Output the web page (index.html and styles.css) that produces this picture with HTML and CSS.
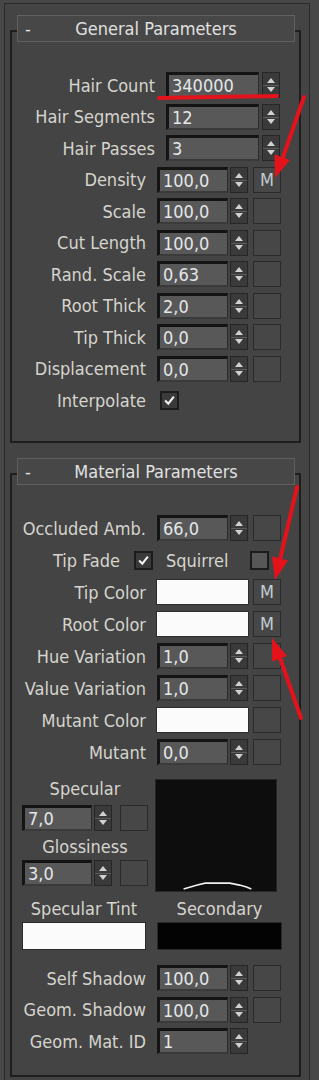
FILE: index.html
```html
<!DOCTYPE html>
<html lang="en">
  <head>
    <meta charset="utf-8" />
    <link rel="stylesheet" href="styles.css">
  </head>
  <body>
    <div class="panel">
      <section class="rollout">
        <div class="rollout-head"><span class="minus">-</span><span class="title">General Parameters</span><span></span></div>
        <div class="rollout-body general">
          <div class="row wide"><span class="lbl">Hair Count</span><span class="fld">340000</span><span class="spin"></span></div>
          <div class="row wide"><span class="lbl">Hair Segments</span><span class="fld">12</span><span class="spin"></span></div>
          <div class="row wide"><span class="lbl">Hair Passes</span><span class="fld">3</span><span class="spin"></span></div>
          <div class="row"><span class="lbl">Density</span><span class="fld">100,0</span><span class="spin"></span><span class="btn">M</span></div>
          <div class="row"><span class="lbl">Scale</span><span class="fld">100,0</span><span class="spin"></span><span class="btn"></span></div>
          <div class="row"><span class="lbl">Cut Length</span><span class="fld">100,0</span><span class="spin"></span><span class="btn"></span></div>
          <div class="row"><span class="lbl">Rand. Scale</span><span class="fld">0,63</span><span class="spin"></span><span class="btn"></span></div>
          <div class="row"><span class="lbl">Root Thick</span><span class="fld">2,0</span><span class="spin"></span><span class="btn"></span></div>
          <div class="row"><span class="lbl">Tip Thick</span><span class="fld">0,0</span><span class="spin"></span><span class="btn"></span></div>
          <div class="row"><span class="lbl">Displacement</span><span class="fld">0,0</span><span class="spin"></span><span class="btn"></span></div>
          <div class="row check-row"><span class="lbl">Interpolate</span><span class="chk on"><svg viewBox="0 0 19 19"><polyline points="4,9.5 8,13.5 15,4.5"/></svg></span></div>
        </div>
      </section>

      <section class="rollout">
        <div class="rollout-head"><span class="minus">-</span><span class="title">Material Parameters</span><span></span></div>
        <div class="rollout-body material">
          <div class="rows">
            <div class="row"><span class="lbl">Occluded Amb.</span><span class="fld">66,0</span><span class="spin"></span><span class="btn"></span></div>
            <div class="row fade"><span class="lbl">Tip Fade</span><span class="chk on"><svg viewBox="0 0 19 19"><polyline points="4,9.5 8,13.5 15,4.5"/></svg></span><span class="sub">Squirrel</span><span class="chk"></span></div>
            <div class="row"><span class="lbl">Tip Color</span><span class="swatch"></span><span class="btn">M</span></div>
            <div class="row"><span class="lbl">Root Color</span><span class="swatch"></span><span class="btn">M</span></div>
            <div class="row"><span class="lbl">Hue Variation</span><span class="fld">1,0</span><span class="spin"></span><span class="btn"></span></div>
            <div class="row"><span class="lbl">Value Variation</span><span class="fld">1,0</span><span class="spin"></span><span class="btn"></span></div>
            <div class="row"><span class="lbl">Mutant Color</span><span class="swatch"></span><span class="btn"></span></div>
            <div class="row"><span class="lbl">Mutant</span><span class="fld">0,0</span><span class="spin"></span><span class="btn"></span></div>
          </div>

          <div class="spec">
            <div class="spec-left">
              <span class="cap">Specular</span>
              <div class="mini"><span class="fld">7,0</span><span class="spin"></span><span class="btn"></span></div>
              <span class="cap gloss">Glossiness</span>
              <div class="mini low"><span class="fld">3,0</span><span class="spin"></span><span class="btn"></span></div>
            </div>
            <div class="curve">
              <svg viewBox="0 0 122 113"><polyline points="28,111 35,109 42,107 50,105 75,105 85,107 92,109 97,111"/></svg>
            </div>
          </div>

          <div class="tints">
            <span class="cap">Specular Tint</span>
            <span class="cap">Secondary</span>
            <span class="tint white"></span>
            <span class="tint black"></span>
          </div>

          <div class="rows shadows">
            <div class="row"><span class="lbl">Self Shadow</span><span class="fld">100,0</span><span class="spin"></span><span class="btn"></span></div>
            <div class="row"><span class="lbl">Geom. Shadow</span><span class="fld">100,0</span><span class="spin"></span><span class="btn"></span></div>
            <div class="row"><span class="lbl">Geom. Mat. ID</span><span class="fld">1</span><span class="spin"></span></div>
          </div>
        </div>
      </section>
    </div>

    <!-- red marks drawn over the screenshot -->
    <svg class="marks" viewBox="0 0 319 1080">
      <line x1="159" y1="98" x2="277" y2="96"/>
      <line x1="304" y1="97" x2="282" y2="160"/>
      <polygon points="275,178 290,160 274.5,154.5"/>
      <line x1="297" y1="487" x2="280" y2="560"/>
      <polygon points="275,580 288,560.5 272,556.5"/>
      <line x1="301" y1="718" x2="280" y2="658"/>
      <polygon points="272,638 287,656 272,661.5"/>
    </svg>
  </body>
</html>
```

FILE: styles.css
```css
* {
  margin: 0;
  box-sizing: border-box;
}
body {
  background-color: #474747;
  font-family: "DejaVu Sans Condensed", "DejaVu Sans", sans-serif;
  font-stretch: condensed;
  font-size: 18px;
  color: #d6d4ce;
  height: 1080px;
  overflow: hidden;
}
.panel {
  width: 306px;
  margin: 3px 0 0 4px;
  padding-top: 11px;
  height: 1077px;
  background-color: #444;
  border: 1px solid #2a2a2a;
  border-bottom: none;
}
.rollout + .rollout {
  margin-top: 15px;
}
.rollout-head {
  position: relative;
  z-index: 1;
  display: grid;
  grid-template-columns: 1fr auto 1fr;
  align-items: center;
  height: 27px;
  margin: 0 14px 0 12px;
  background-color: #474747;
  border: 1px solid #606060;
  color: #e0e0e0;
}
.minus {
  padding-left: 7px;
}
.rollout-body {
  margin: -12px 8px 0 5px;
  border: 2px solid #1e1e1e;
}
.general {
  display: flex;
  flex-direction: column;
  gap: 5.5px;
  padding: 40px 0 28px;
}
.material {
  padding: 40px 0 21px;
}
.rows {
  display: flex;
  flex-direction: column;
  gap: 6px;
}
.rows.shadows {
  gap: 5.5px;
  margin-top: 15px;
}
.row {
  display: flex;
  align-items: center;
  height: 26px;
}
.lbl {
  width: 134px;
  margin-right: 11px;
  text-align: right;
  white-space: nowrap;
}
.row.wide .lbl {
  width: 143px;
}
.fld {
  width: 71px;
  height: 26px;
  flex: none;
  padding-left: 3px;
  line-height: 21px;
  background-color: #585858;
  color: #e4e7ea;
  border-top: 3px solid #141414;
  border-left: 3px solid #141414;
  border-right: 1px solid #2c2c2c;
  border-bottom: 2px solid #3a3a3a;
}
.row.wide .fld {
  width: 93px;
}
.spin {
  position: relative;
  width: 18px;
  height: 26px;
  flex: none;
  margin-left: 2px;
  background: linear-gradient(#3a3a3a 0 12px, #5c5c5c 12px 13px, #3a3a3a 13px);
  border: 1px solid #262626;
}
.row.wide .spin {
  margin-left: 3px;
}
.spin::before,
.spin::after {
  content: "";
  position: absolute;
  left: 4px;
  border-left: 4px solid transparent;
  border-right: 4px solid transparent;
}
.spin::before {
  top: 5px;
  border-bottom: 5px solid #d2d2d2;
}
.spin::after {
  bottom: 5px;
  border-top: 5px solid #d2d2d2;
}
.btn {
  width: 28px;
  height: 26px;
  flex: none;
  margin-left: 5px;
  background-color: #474747;
  border: 1px solid #2a2a2a;
  color: #c3ccd4;
  text-align: center;
  line-height: 24px;
}
.chk {
  width: 19px;
  height: 19px;
  flex: none;
  margin-left: 3px;
  background-color: #575757;
  border: 2px solid #1c1c1c;
}
.chk.on {
  background-color: #3a3a3a;
}
.chk svg {
  display: block;
  width: 15px;
  height: 15px;
}
.chk polyline {
  fill: none;
  stroke: #f4f4f4;
  stroke-width: 2.6;
}
.fade .lbl {
  width: 108px;
  margin-right: 14px;
}
.fade .chk {
  margin-left: 0;
}
.sub {
  width: 84px;
  margin-left: 13px;
}
.swatch {
  width: 93px;
  height: 26px;
  flex: none;
  margin-left: -1px;
  background-color: #fbfbfb;
  border: 1px solid #2e2e2e;
}
.btn + .btn,
.swatch + .btn {
  margin-left: 4px;
}
.spec {
  display: grid;
  grid-template-columns: 126px 122px;
  column-gap: 7px;
  margin: 14px 0 0 10px;
}
.spec-left {
  display: flex;
  flex-direction: column;
  align-items: center;
}
.cap {
  line-height: 20px;
  text-align: center;
  white-space: nowrap;
}
.gloss {
  margin-top: 6px;
}
.mini {
  display: flex;
  margin-top: 6px;
}
.mini.low {
  margin-top: 3px;
}
.mini .fld {
  width: 70px;
}
.mini .btn {
  margin-left: 8px;
}
.curve {
  height: 113px;
  background-color: #0d0d0d;
  border: 1px solid #262626;
}
.curve svg {
  display: block;
  width: 100%;
  height: 100%;
}
.curve polyline {
  fill: none;
  stroke: #f0f0f0;
  stroke-width: 1.6;
}
.tints {
  display: grid;
  grid-template-columns: 124px 125px;
  column-gap: 11px;
  row-gap: 3px;
  margin: 7px 0 0 10px;
}
.tint {
  height: 28px;
  border: 1px solid #2a2a2a;
}
.tint.white {
  background-color: #fbfbfb;
}
.tint.black {
  background-color: #030303;
}
.marks {
  position: absolute;
  top: 0;
  left: 0;
  width: 319px;
  height: 1080px;
  pointer-events: none;
}
.marks line {
  stroke: #e4121b;
  stroke-width: 4;
  stroke-linecap: round;
}
.marks polygon {
  fill: #e4121b;
}
```
